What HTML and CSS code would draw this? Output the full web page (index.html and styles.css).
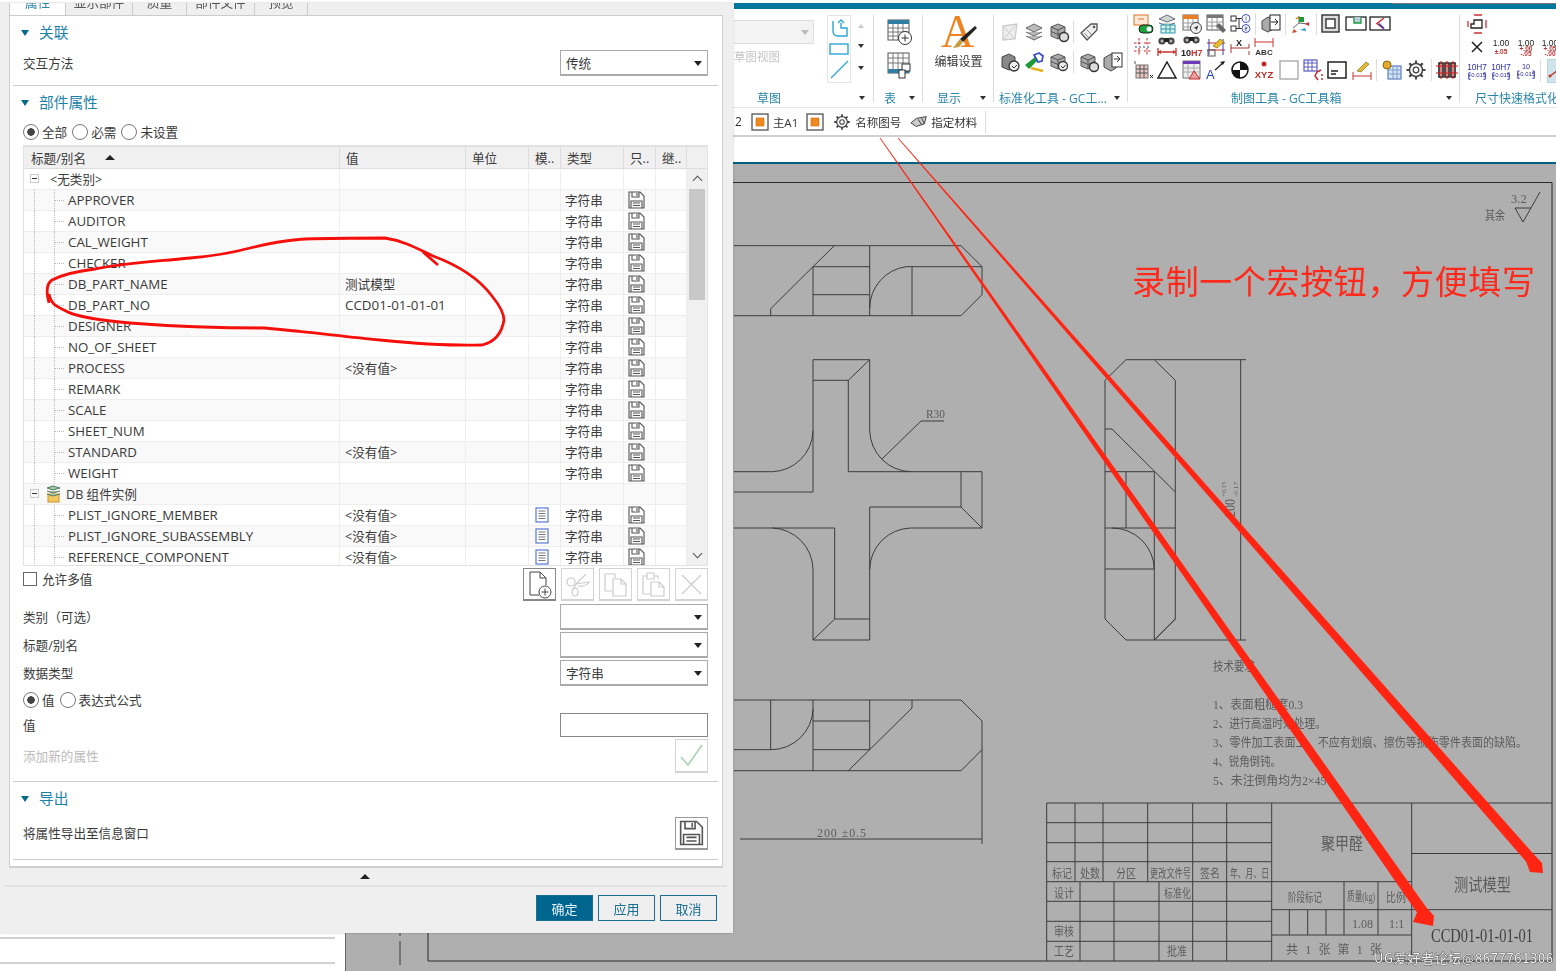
FILE: index.html
```html
<!DOCTYPE html>
<html lang="zh-CN">
<head>
    <meta charset="UTF-8">
    <title>部件属性</title>
    <link rel="stylesheet" href="styles.css">
</head>
<body>
<svg class="defs" width="0" height="0">
    <symbol id="floppy" viewBox="0 0 17 18"><path d="M1 1h11l4 4v12H1zM4 1v5h7V1M9 2v3M3 17v-7h11v7M5 12h7M5 14.500h7" fill="none" stroke="#555" stroke-width="1.100"/></symbol>
    <symbol id="doc" viewBox="0 0 14 16"><rect x="1" y="1" width="12" height="14" fill="#fff" stroke="#5a78d8" stroke-width="1.200"/><path d="M3.500 4h7M3.500 6.500h7M3.500 9h7M3.500 11.500h7" stroke="#777"/></symbol>
    <symbol id="bino" viewBox="0 0 22 22"><circle cx="6" cy="6" r="3.600" fill="#444"/><circle cx="15" cy="6" r="3.600" fill="#444"/><path d="M8 3h5v4H8z" fill="#222"/><circle cx="6" cy="6" r="1.500" fill="#bbb"/><circle cx="15" cy="6" r="1.500" fill="#bbb"/></symbol>
    <symbol id="dim" viewBox="0 0 22 22"><path d="M2 13v8M20 13v8M2 17h18" stroke="#c33" stroke-width="1.300" fill="none"/><path d="M2 17l3-2v4zM20 17l-3-2v4z" fill="#c33"/></symbol>
    <symbol id="cube" viewBox="0 0 22 22"><path d="M3 6l7-3 7 3v9l-7 3-7-3z" fill="#aaa" stroke="#555"/><path d="M3 6l7 3 7-3M10 9v9M3 10.500l7 3 7-3" fill="none" stroke="#555"/></symbol>
    <symbol id="gear" viewBox="0 0 22 22"><circle cx="11" cy="11" r="6.500" fill="none" stroke="#444" stroke-width="1.500"/><circle cx="11" cy="11" r="2.800" fill="none" stroke="#444" stroke-width="1.300"/><path d="M11 1.500v3M11 17.500v3M1.500 11h3M17.500 11h3M4.300 4.300l2.100 2.100M15.600 15.600l2.100 2.100M4.300 17.700l2.100-2.100M15.600 6.400l2.100-2.100" stroke="#444" stroke-width="2.200"/></symbol>
    <symbol id="orange" viewBox="0 0 18 18"><rect x="1" y="1" width="16" height="16" fill="#fff" stroke="#444" stroke-width="1.200"/><rect x="5" y="5" width="8" height="8" fill="#f08a1d" stroke="#c96a10" stroke-width=".6"/></symbol>
    <symbol id="tol" viewBox="0 0 24 22"><text x="12" y="10" text-anchor="middle" font-size="9" font-family="Liberation Sans" fill="#2b2ba8">10H7</text><path d="M3 13v7M21 13v7M3 13h2M3 20h2M21 13h-2M21 20h-2" stroke="#2b2ba8" fill="none"/><text x="12" y="18" text-anchor="middle" font-size="6.500" font-family="Liberation Sans" fill="#2b2ba8">+0.015</text></symbol>
</svg>

<div class="app">
    <div class="title-strip"></div>
    <div class="ribbon">
        <div class="grp g-sketch">
            <div class="grp-body sketch-body">
                <div class="sketch-view">
                    <div class="off-select"></div>
                    <div class="off-text">草图视图</div>
                </div>
                <div class="gallery">
                    <svg width="22" height="22" viewBox="0 0 22 22"><path d="M5 3v10q0 5 5 5h9v-8h-6V5M10 5l3-3 3 3" fill="none" stroke="#2aa5d6" stroke-width="1.400"/></svg>
                    <svg width="22" height="16" viewBox="0 0 22 16"><rect x="2" y="3" width="18" height="10" fill="none" stroke="#2aa5d6" stroke-width="1.400"/></svg>
                    <svg width="22" height="22" viewBox="0 0 22 22"><path d="M3 20L20 3" stroke="#2aa5d6" stroke-width="1.300"/></svg>
                </div>
                <div class="gallery-arrows">
                    <span class="up off"></span>
                    <span class="dn"></span>
                    <span class="more"></span>
                </div>
            </div>
            <div class="grp-label"><span class="lbl-sketch">草图</span><i class="caret"></i></div>
        </div>

        <div class="grp g-table">
            <div class="grp-body col-icons">
                <svg width="26" height="28" viewBox="0 0 26 28"><rect x="1" y="2" width="21" height="20" fill="#fff" stroke="#555"/><rect x="1" y="2" width="21" height="4" fill="#2f7fa3"/><path d="M1 10h21M1 14h21M1 18h21M6 6v16M11 6v16M16 6v16" stroke="#777"/><circle cx="18" cy="20" r="6.500" fill="#fff" stroke="#333"/><path d="M18 16.500v7M14.500 20h7" stroke="#333"/></svg>
                <svg width="26" height="28" viewBox="0 0 26 28"><rect x="1" y="2" width="21" height="20" fill="#fff" stroke="#555"/><rect x="1" y="18" width="21" height="4" fill="#2f7fa3"/><path d="M1 7h21M1 12h21M6 2v16M11 2v16M16 2v16" stroke="#777"/><rect x="15" y="13" width="8" height="7" fill="#fff" stroke="#333"/><rect x="12" y="19" width="6" height="8" fill="#fff" stroke="#333"/></svg>
            </div>
            <div class="grp-label"><span class="lbl-table">表</span><i class="caret"></i></div>
        </div>

        <div class="grp g-show">
            <div class="grp-body show-body">
                <svg width="40" height="36" viewBox="0 0 40 36"><text x="2" y="33" font-family="Liberation Serif" font-size="46" fill="#ef8320">A</text><path d="M36 12l2 2-14 14-3-3z" fill="#222"/><path d="M21 25l3 3-4 5-6 1q3-4 7-9z" fill="#c79b3a"/></svg>
                <div class="show-text">编辑设置</div>
            </div>
            <div class="grp-label"><span class="lbl-show">显示</span><i class="caret"></i></div>
        </div>

        <div class="grp g-std">
            <div class="grp-body std-body">
                <div class="icon-row">
                    <svg class="ic" viewBox="0 0 22 22"><path d="M4 5l14-2-2 15-12 1z" fill="#eee" stroke="#ccc" stroke-width="1.300"/><path d="M4 5l12 13M18 3L4 19" stroke="#ccc"/></svg>
                    <svg class="ic" viewBox="0 0 22 22"><path d="M11 3l8 4-8 4-8-4z M3 11l8 4 8-4M3 15l8 4 8-4" fill="#bbb" stroke="#666"/></svg>
                    <svg class="ic" viewBox="0 0 22 22"><use href="#cube"/><circle cx="16" cy="16" r="4.500" fill="#ddd" stroke="#333" stroke-width="1.400"/></svg>
                    <i class="vsep"></i>
                    <svg class="ic" viewBox="0 0 22 22"><path d="M3 12L13 3h6v6L9 19z" fill="#eee" stroke="#555" stroke-width="1.300"/><circle cx="16" cy="6" r="1.300" fill="#555"/><path d="M6 12l5 5M9 9l5 5" stroke="#888"/></svg>
                </div>
                <div class="icon-row">
                    <svg class="ic" viewBox="0 0 22 22"><path d="M3 6l7-3 6 3v10l-6 3-7-3z" fill="#888" stroke="#444"/><circle cx="15" cy="15" r="5" fill="#eee" stroke="#333" stroke-width="1.300"/><path d="M13 15l2 2 3-3" stroke="#333" fill="none"/></svg>
                    <svg class="ic" viewBox="0 0 22 22"><path d="M2 14L12 6l3 3-9 9z" fill="#1f9a3b"/><path d="M11 4l5-2 4 3-1 5-4 1z" fill="none" stroke="#3b50c8" stroke-width="1.800"/><path d="M8 17l12 3" stroke="#e6b21c" stroke-width="2.500"/></svg>
                    <svg class="ic" viewBox="0 0 22 22"><use href="#cube"/><circle cx="15" cy="15" r="4.500" fill="#eee" stroke="#333" stroke-width="1.300"/><path d="M13 15l2 2 2.500-3" stroke="#333" fill="none"/></svg>
                    <i class="vsep"></i>
                    <svg class="ic" viewBox="0 0 22 22"><use href="#cube"/><circle cx="16" cy="16" r="4.500" fill="#ddd" stroke="#333" stroke-width="1.400"/></svg>
                    <svg class="ic" viewBox="0 0 22 22"><path d="M2 7l7-4 5 2v12l-5 3-7-4z" fill="#aaa" stroke="#444"/><rect x="10" y="2" width="10" height="14" fill="#fff" stroke="#333"/><path d="M12 8h6M15 5l3 3-3 3" stroke="#333" fill="none"/></svg>
                </div>
            </div>
            <div class="grp-label"><span class="lbl-std">标准化工具 - GC工...</span><i class="caret"></i></div>
        </div>

        <div class="grp g-gc">
            <div class="grp-body gc-body">
                <div class="gc-row">
                    <svg class="ic" viewBox="0 0 22 22"><rect x="2" y="2" width="14" height="10" fill="#fde9d6" stroke="#d8742a"/><path d="M6 6h6" stroke="#d8742a"/><rect x="7" y="12" width="14" height="8" rx="4" fill="#1aa33c" stroke="#222"/><circle cx="17" cy="16" r="2.500" fill="#fff"/></svg>
                    <svg class="ic" viewBox="0 0 22 22"><path d="M11 2l8 4-8 3-8-3zM3 10l8 3 8-3" fill="#cfd8cc" stroke="#668"/><rect x="5" y="12" width="14" height="8" fill="#d8f0e6" stroke="#2a9ab0"/><path d="M5 16h14M10 12v8M14 12v8" stroke="#2a9ab0"/></svg>
                    <svg class="ic" viewBox="0 0 22 22"><rect x="2" y="2" width="15" height="15" fill="#fff" stroke="#666"/><rect x="2" y="2" width="15" height="4" fill="#e87f24"/><path d="M2 10h15M2 14h15M7 6v11M12 6v11" stroke="#999"/><circle cx="15" cy="15" r="5.500" fill="#eee" stroke="#444"/><path d="M12.500 15l5-2.500-2 5-.8-2z" fill="#333"/></svg>
                    <svg class="ic" viewBox="0 0 22 22"><rect x="2" y="2" width="16" height="15" fill="#fff" stroke="#555"/><rect x="2" y="2" width="16" height="3" fill="#777"/><path d="M2 9h16M2 13h16M7 5v12M12 5v12" stroke="#999"/><path d="M11 13l7 7 3-3-7-7z" fill="#666"/></svg>
                    <svg class="ic" viewBox="0 0 22 22"><rect x="2" y="3" width="5" height="5" fill="none" stroke="#333"/><rect x="2" y="13" width="5" height="5" fill="none" stroke="#333"/><path d="M7 5.500h6M7 15.500h6M10 5.500v10" stroke="#333"/><circle cx="17" cy="5.500" r="4" fill="none" stroke="#4450c8"/><circle cx="17" cy="15.500" r="4" fill="none" stroke="#4450c8"/><path d="M17 3.500v4M16 14h2v1.500h-2v1.500h2" stroke="#4450c8" fill="none" stroke-width=".8"/></svg>
                    <i class="vsep"></i>
                    <svg class="ic" viewBox="0 0 22 22"><path d="M2 8l6-4 5 2v10l-5 3-6-3z" fill="#aaa" stroke="#444"/><rect x="10" y="2" width="10" height="15" fill="#fff" stroke="#222"/><path d="M11 9h7M15 6l3 3-3 3" stroke="#222" fill="none"/></svg>
                    <i class="vsep"></i>
                    <svg class="ic" viewBox="0 0 22 22"><path d="M9 10l-6 5M9 10v-7M9 10l9 1" stroke="#666" fill="none"/><path d="M4 16l-2 4 5-1z" fill="#d8442a"/><path d="M5 6l4-3 1 3z" fill="#e8842a"/><rect x="9" y="4" width="5" height="5" fill="#1a9a3a"/><path d="M15 11l4-2v4z" fill="#d82a2a"/><path d="M10 17l5-2 1 3z" fill="#1a9ad8"/></svg>
                    <i class="vsep"></i>
                    <svg class="ic" viewBox="0 0 22 22"><rect x="2" y="2" width="17" height="17" fill="#ddd" stroke="#222" stroke-width="1.300"/><rect x="6" y="6" width="9" height="9" fill="#fff" stroke="#222" stroke-width="1.300"/></svg>
                    <svg class="ic" viewBox="0 0 22 22"><rect x="1" y="4" width="20" height="13" fill="#fff" stroke="#222" stroke-width="1.300"/><path d="M9 4v6h7V4" fill="#bcd" stroke="#1a9a3a" stroke-width="1.300"/></svg>
                    <svg class="ic" viewBox="0 0 22 22"><rect x="1" y="4" width="20" height="13" fill="#fff" stroke="#222" stroke-width="1.300"/><path d="M15 5l-7 5.500 7 5.500" fill="none" stroke="#d82a2a" stroke-width="1.500"/><path d="M10 10.500l5 5" stroke="#2a40d8" stroke-width="1.500"/></svg>
                </div>
                <div class="gc-row">
                    <svg class="ic" viewBox="0 0 22 22"><path d="M2 7h8M12 7h8M2 15h8M12 15h8M7 2v8M15 2v8M7 12v8M15 12v8" stroke="#c32a2a" stroke-dasharray="2.500 1.500"/><path d="M3 11h16" stroke="#3a3ab8" stroke-dasharray="2 2"/></svg>
                    <svg class="ic" viewBox="0 0 22 22"><use href="#bino" width="22" height="22" y="-1"/><use href="#dim" y="-1" width="22" height="22"/></svg>
                    <svg class="ic" viewBox="0 0 22 22"><use href="#bino" width="22" height="22" y="-2"/><text x="0" y="20" font-family="Liberation Sans" font-size="9" font-weight="700" fill="#222">10<tspan fill="#c33">H7</tspan></text></svg>
                    <svg class="ic" viewBox="0 0 22 22"><path d="M2 7h18M2 14h18" stroke="#c32a2a"/><path d="M4 3v16M18 3v16" stroke="#3a3ab8"/><path d="M8 10l7-7 4 3-7 6z" fill="#e6bd2c" stroke="#8a6a10" stroke-width=".7"/><rect x="3" y="14" width="7" height="6" fill="none" stroke="#555"/></svg>
                    <svg class="ic" viewBox="0 0 22 22"><path d="M2 8v9M20 8v4M20 15v4M2 12h18" stroke="#a33" fill="none"/><text x="7" y="10" font-family="Liberation Sans" font-size="9" font-weight="700" fill="#222">X</text></svg>
                    <svg class="ic" viewBox="0 0 22 22"><path d="M2 2v9M20 2v9M2 6h18" stroke="#c33"/><text x="11" y="19" text-anchor="middle" font-family="Liberation Sans" font-size="8" font-weight="700" fill="#333">ABC</text></svg>
                </div>
                <div class="gc-row">
                    <svg class="ic" viewBox="0 0 22 22"><path d="M3 2v3" stroke="#555"/><rect x="4" y="6" width="12" height="13" fill="#e8c9c4" stroke="#777"/><path d="M4 10h12M4 14h12M8 6v13M12 6v13" stroke="#555"/><path d="M18 16l3 3M21 16l-3 3" stroke="#222"/></svg>
                    <svg class="ic" viewBox="0 0 22 22"><path d="M11 3l9 16H2z" fill="none" stroke="#222" stroke-width="1.500"/></svg>
                    <svg class="ic" viewBox="0 0 22 22"><rect x="2" y="2" width="17" height="17" fill="#eee" stroke="#777"/><rect x="2" y="2" width="17" height="3" fill="#6a3ab8"/><path d="M2 9h17M2 13h17M7 5v14M13 5v14" stroke="#aaa"/><path d="M13 12l6 8H8z" fill="#e8a0a0" stroke="#c32a2a"/></svg>
                    <svg class="ic" viewBox="0 0 22 22"><text x="1" y="20" font-family="Liberation Sans" font-size="13" fill="#2a40b8">A</text><path d="M10 11l9-8" stroke="#222" stroke-width="1.300"/><path d="M20 2l-5 1 3 3z" fill="#222"/></svg>
                    <svg class="ic" viewBox="0 0 22 22"><circle cx="11" cy="11" r="8" fill="#fff" stroke="#111" stroke-width="1.500"/><path d="M11 3a8 8 0 0 1 8 8h-8zM11 19a8 8 0 0 1-8-8h8z" fill="#111"/></svg>
                    <svg class="ic" viewBox="0 0 22 22"><circle cx="11" cy="5" r="2.500" fill="#c32a2a"/><text x="11" y="19" text-anchor="middle" font-family="Liberation Sans" font-size="9.500" font-weight="700" fill="#c32a2a">XYZ</text></svg>
                    <svg class="ic" viewBox="0 0 22 22"><rect x="2" y="2" width="18" height="18" fill="#fff" stroke="#aaa" stroke-width="1.400"/></svg>
                    <svg class="ic" viewBox="0 0 22 22"><rect x="2" y="1" width="13" height="11" fill="#fff" stroke="#3a3ab8"/><path d="M2 4h13M2 8h13M6 1v11M10 1v11" stroke="#3a3ab8" stroke-width=".8"/><path d="M19 11l-4 2-2 4 3 4M20 19v2M20 15v2" stroke="#c3202a" fill="none" stroke-width="1.400"/></svg>
                    <svg class="ic" viewBox="0 0 22 22"><rect x="2" y="3" width="18" height="16" fill="#fff" stroke="#222" stroke-width="1.500"/><path d="M5 12h7M5 15h5" stroke="#222" stroke-width="1.300"/></svg>
                    <svg class="ic" viewBox="0 0 22 22"><path d="M2 13v8M20 13v8M2 17h18" stroke="#c33"/><path d="M6 12l9-9 3 2-8 8z" fill="#e6bd2c" stroke="#7a6a30" stroke-width=".7"/></svg>
                    <i class="vsep"></i>
                    <svg class="ic" viewBox="0 0 22 22"><rect x="7" y="7" width="13" height="13" fill="#d8e4f4" stroke="#3a6ab8"/><path d="M7 11h13M7 15h13M12 7v13M16 7v13" stroke="#7a9ac8"/><circle cx="6" cy="6" r="4" fill="#e6a82c" stroke="#8a6a10"/></svg>
                    <svg class="ic" viewBox="0 0 22 22"><use href="#gear"/></svg>
                    <i class="vsep"></i>
                    <svg class="ic" viewBox="0 0 22 22"><path d="M3 4h4v14H3zM9 4h4v14H9zM15 4h4v14h-4z" fill="none" stroke="#222" stroke-width="1.600"/><path d="M0 7h22M0 14h22M5 2v18M11 2v18M17 2v18" stroke="#d81a1a" stroke-width="1.100"/></svg>
                </div>
            </div>
            <div class="grp-label"><span class="lbl-gc">制图工具 - GC工具箱</span><i class="caret"></i></div>
        </div>

        <div class="grp g-fmt">
            <div class="grp-body gc-body fmt-body">
                <div class="gc-row">
                    <svg class="ic" viewBox="0 0 22 22"><path d="M8 7h8v8H5v-4h3z" fill="none" stroke="#222" stroke-width="1.300"/><path d="M8 2h8M8 20h8M2 8v6M20 7v8" stroke="#c33" stroke-width="1.300"/></svg>
                </div>
                <div class="gc-row">
                    <svg class="ic" viewBox="0 0 22 22"><path d="M6 6l10 10M16 6L6 16" stroke="#222" stroke-width="1.500"/></svg>
                    <svg class="ic" viewBox="0 0 22 22"><text x="11" y="10" text-anchor="middle" class="num">1.00</text><text x="11" y="18" text-anchor="middle" class="tolr">±.05</text></svg>
                    <svg class="ic" viewBox="0 0 22 22"><text x="11" y="10" text-anchor="middle" class="num">1.00</text><text x="11" y="15" text-anchor="middle" class="tolr">+.00</text><text x="11" y="20" text-anchor="middle" class="tolr">-.05</text></svg>
                    <svg class="ic" viewBox="0 0 22 22"><text x="11" y="10" text-anchor="middle" class="num">1.00</text><text x="11" y="15" text-anchor="middle" class="tolr">+.05</text><text x="11" y="20" text-anchor="middle" class="tolr">-.00</text></svg>
                </div>
                <div class="gc-row">
                    <svg class="ic" viewBox="0 0 24 22"><use href="#tol"/></svg>
                    <svg class="ic" viewBox="0 0 24 22"><use href="#tol"/></svg>
                    <svg class="ic" viewBox="0 0 24 22"><text x="12" y="9" text-anchor="middle" font-size="8" font-family="Liberation Sans" fill="#2b2ba8">10</text><path d="M3 11v8M21 11v8M3 11h2M3 19h2M21 11h-2M21 19h-2" stroke="#2b2ba8" fill="none"/><text x="12" y="17" text-anchor="middle" font-size="6.500" font-family="Liberation Sans" fill="#2b2ba8">+0.015</text></svg>
                    <i class="vsep"></i>
                    <span class="ic-selected"><svg width="22" height="22" viewBox="0 0 22 22"><path d="M2 16l8-6" stroke="#c33" stroke-width="1.400"/><circle cx="2" cy="16" r="1.500" fill="#c33"/></svg></span>
                </div>
            </div>
            <div class="grp-label"><span class="lbl-fmt">尺寸快速格式化</span></div>
        </div>
    </div>

    <div class="toolbar">
        <span class="tb-text t2">2</span>
        <svg class="tb-orange" width="18" height="18"><use href="#orange"/></svg>
        <span class="tb-text">主A1</span>
        <svg class="tb-orange o2" width="18" height="18"><use href="#orange"/></svg>
        <svg class="tb-gear" width="18" height="18" viewBox="0 0 22 22"><use href="#gear"/></svg>
        <span class="tb-text">名称图号</span>
        <svg class="tb-tag" width="18" height="14" viewBox="0 0 20 14"><path d="M1 8l6-5 11-2-2 8-9 3z" fill="#ccc" stroke="#333"/><path d="M9 4l4 6M13 3l3 6" stroke="#333"/></svg>
        <span class="tb-text">指定材料</span>
        <i class="tb-sep"></i>
    </div>
    <div class="blank-bar"></div>

    <div class="viewport">
        <div class="side">
            <div class="side-row"></div>
            <div class="side-row"></div>
        </div>
        <div class="canvas">
            <svg class="drawing" viewBox="345 165 1211 806" width="1211" height="806">
                <g class="ln">
                    <path d="M400 165V971" stroke-dasharray="24 5 3 5"/>
                    <path d="M428 183.500H1552V962H428z" class="frame"/>

                    <path d="M734 246.700H961L982 267.700V295.700L961 316.700H734"/>
                    <path d="M834.300 246.700L813 267.700L770.700 309.700V316.700M813 267.700V316.700M869.700 246.700V316.700M912 267.700V316.700M813 267.700H869.700M906 267.700H982M813 295.700H869.700"/>
                    <path d="M869.700 309A42 42 0 0 1 906 267.700"/>

                    <path d="M813 493V360.700H869.700V432M813 381.300H848.300L869.700 360.700M848.300 381.300V472.700H982V529L961 508V472.700M961 508H869.700V641H813V570M734 493H813"/>
                    <path d="M813 432A42 42 0 0 1 772.300 472.700H734M869.700 432A42 42 0 0 0 910.700 472.700"/>
                    <path d="M734 529H834.700M772.300 529A42 42 0 0 1 813 570M869.700 570A42 42 0 0 1 910.700 529H982"/>
                    <path d="M834.700 529V620H869.700M834.700 620L813 641"/>
                    <path d="M921 422H944M921 422L882 460"/>

                    <path d="M734 701H961L982 722V845M982 750.700L961 771.700H734M770.700 701V750.700H734M813 701V771.700M869.700 701V750.700M813 722H869.700M813 750.700H869.700M912 701V709L848.300 771.700"/>
                    <path d="M813 710A42 42 0 0 1 770.700 750.700"/>
                    <path d="M740 840H982"/>

                    <path d="M1126 360.700H1154.300L1175.300 381.300V620L1154.300 641H1126L1105 620V381.300z"/>
                    <path d="M1105 430H1112L1175.300 493M1105 472.700H1154.300V641M1126 472.700V529M1105 529H1175.300M1105 570H1154.300M1112 529A42 42 0 0 1 1154.300 570M1175.300 620L1154.300 641"/>
                    <path d="M1154 360.700H1246M1154 641H1246M1240.700 360.700V641"/>
                    <path d="M1515 209H1531M1515 209L1523 223L1540 193"/>

                    <path d="M1046.700 804H1552M1046.700 823.700H1271.700M1046.700 843.700H1271.700M1046.700 862.700H1271.700M1046.700 882.700H1411.700M1046.700 902.300H1271.700M1046.700 922.300H1271.700M1046.700 942.300H1271.700"/>
                    <path d="M1046.700 804V962M1075 804V882.700M1103 804V882.700M1147.700 804V882.700M1192.700 804V962M1226.700 804V962M1271.700 804V962M1080 882.700V962M1114 882.700V962M1159 882.700V962M1411.700 804V962"/>
                    <path d="M1271.700 910.700H1552M1271.700 936H1411.700M1344 882.700V936M1378 882.700V936M1289.300 910.700V936M1307.700 910.700V936M1326 910.700V936M1411.700 854.500H1552"/>
                </g>
                <g class="dt">
                    <text x="926" y="419" class="s" textLength="19" lengthAdjust="spacingAndGlyphs">R30</text>
                    <text x="1511" y="204" class="s">3.2</text>
                    <text x="1485" y="221" class="s" textLength="20" lengthAdjust="spacingAndGlyphs">其余</text>
                    <text x="817" y="838" textLength="49">200 ±0.5</text>
                    <text x="1235" y="518" transform="rotate(-90 1235 518)" class="md" textLength="18" lengthAdjust="spacingAndGlyphs">200</text>
                    <text x="1226" y="498" transform="rotate(-90 1226 498)" class="tiny" textLength="15" lengthAdjust="spacingAndGlyphs">+0.15</text>
                    <text x="1238" y="498" transform="rotate(-90 1238 498)" class="tiny" textLength="15" lengthAdjust="spacingAndGlyphs">-0.17</text>

                    <text x="1213" y="672" class="s" textLength="42" lengthAdjust="spacingAndGlyphs">技术要求</text>
                    <text x="1213" y="710" class="s" textLength="90" lengthAdjust="spacingAndGlyphs">1、表面粗糙度0.3</text>
                    <text x="1213" y="729" class="s" textLength="113" lengthAdjust="spacingAndGlyphs">2、进行高温时效处理。</text>
                    <text x="1213" y="748" class="s" textLength="314" lengthAdjust="spacingAndGlyphs">3、零件加工表面上，不应有划痕、擦伤等损伤零件表面的缺陷。</text>
                    <text x="1213" y="767" class="s" textLength="68" lengthAdjust="spacingAndGlyphs">4、锐角倒钝。</text>
                    <text x="1213" y="786" class="s" textLength="130" lengthAdjust="spacingAndGlyphs">5、未注倒角均为2×45°。</text>

                    <text x="1052" y="879" class="xs" textLength="20" lengthAdjust="spacingAndGlyphs">标记</text>
                    <text x="1080" y="879" class="xs" textLength="20" lengthAdjust="spacingAndGlyphs">处数</text>
                    <text x="1116" y="879" class="xs" textLength="20" lengthAdjust="spacingAndGlyphs">分区</text>
                    <text x="1150" y="879" class="xs" textLength="41" lengthAdjust="spacingAndGlyphs">更改文件号</text>
                    <text x="1200" y="879" class="xs" textLength="20" lengthAdjust="spacingAndGlyphs">签名</text>
                    <text x="1230" y="879" class="xs" textLength="39" lengthAdjust="spacingAndGlyphs">年、月、日</text>
                    <text x="1054" y="899" class="xs" textLength="20" lengthAdjust="spacingAndGlyphs">设计</text>
                    <text x="1164" y="899" class="xs" textLength="27" lengthAdjust="spacingAndGlyphs">标准化</text>
                    <text x="1054" y="937" class="xs" textLength="20" lengthAdjust="spacingAndGlyphs">审核</text>
                    <text x="1054" y="957" class="xs" textLength="20" lengthAdjust="spacingAndGlyphs">工艺</text>
                    <text x="1167" y="957" class="xs" textLength="20" lengthAdjust="spacingAndGlyphs">批准</text>
                    <text x="1321" y="851" class="lg" textLength="42" lengthAdjust="spacingAndGlyphs">聚甲醛</text>
                    <text x="1288" y="903" class="xs" textLength="34" lengthAdjust="spacingAndGlyphs">阶段标记</text>
                    <text x="1347" y="902" class="xs" textLength="28" lengthAdjust="spacingAndGlyphs">质量(kg)</text>
                    <text x="1386" y="903" class="xs" textLength="20" lengthAdjust="spacingAndGlyphs">比例</text>
                    <text x="1352" y="929" class="xs">1.08</text>
                    <text x="1389" y="929" class="xs">1:1</text>
                    <text x="1286" y="955" class="xs" textLength="96">共 1 张 第 1 张</text>
                    <text x="1454" y="892" class="lg" textLength="57" lengthAdjust="spacingAndGlyphs">测试模型</text>
                    <text x="1431" y="943" class="ccd" textLength="102" lengthAdjust="spacingAndGlyphs">CCD01-01-01-01</text>
                </g>
            </svg>
        </div>
    </div>
</div>

<div class="dialog">
    <div class="tabs">
        <div class="tab active w1">属性</div>
        <div class="tab w2">显示部件</div>
        <div class="tab w3">质量</div>
        <div class="tab w4">部件文件</div>
        <div class="tab w5">预览</div>
    </div>
    <div class="panel">
        <section class="sec sec1">
            <div class="sec-head"><i class="tri"></i>关联</div>
            <div class="row field-top">
                <span>交互方法</span>
                <div class="sel">传统</div>
            </div>
        </section>

        <section class="sec sec2">
            <div class="sec-head"><i class="tri"></i>部件属性</div>
            <div class="radios filter">
                <label class="radio on">全部</label>
                <label class="radio">必需</label>
                <label class="radio">未设置</label>
            </div>

            <div class="table">
                <div class="thead">
                    <div class="th th-name">标题/别名<i class="sort"></i></div>
                    <div class="th">值</div>
                    <div class="th">单位</div>
                    <div class="th">模..</div>
                    <div class="th">类型</div>
                    <div class="th">只..</div>
                    <div class="th">继..</div>
                    <div class="th th-last"></div>
                </div>
                <div class="tbody">
                    <div class="rows">
                        <div class="tr"><div class="td cat"><i class="mbox"></i><span class="cat-text">&lt;无类别&gt;</span></div><div class="td"></div><div class="td"></div><div class="td"></div><div class="td"></div><div class="td"></div><div class="td"></div></div>
                        <div class="tr"><div class="td leaf">APPROVER</div><div class="td"></div><div class="td"></div><div class="td"></div><div class="td ty">字符串</div><div class="td ro"><svg class="fl"><use href="#floppy"/></svg></div><div class="td"></div></div>
                        <div class="tr"><div class="td leaf">AUDITOR</div><div class="td"></div><div class="td"></div><div class="td"></div><div class="td ty">字符串</div><div class="td ro"><svg class="fl"><use href="#floppy"/></svg></div><div class="td"></div></div>
                        <div class="tr"><div class="td leaf">CAL_WEIGHT</div><div class="td"></div><div class="td"></div><div class="td"></div><div class="td ty">字符串</div><div class="td ro"><svg class="fl"><use href="#floppy"/></svg></div><div class="td"></div></div>
                        <div class="tr"><div class="td leaf">CHECKER</div><div class="td"></div><div class="td"></div><div class="td"></div><div class="td ty">字符串</div><div class="td ro"><svg class="fl"><use href="#floppy"/></svg></div><div class="td"></div></div>
                        <div class="tr"><div class="td leaf">DB_PART_NAME</div><div class="td val">测试模型</div><div class="td"></div><div class="td"></div><div class="td ty">字符串</div><div class="td ro"><svg class="fl"><use href="#floppy"/></svg></div><div class="td"></div></div>
                        <div class="tr"><div class="td leaf">DB_PART_NO</div><div class="td val-latin">CCD01-01-01-01</div><div class="td"></div><div class="td"></div><div class="td ty">字符串</div><div class="td ro"><svg class="fl"><use href="#floppy"/></svg></div><div class="td"></div></div>
                        <div class="tr"><div class="td leaf">DESIGNER</div><div class="td"></div><div class="td"></div><div class="td"></div><div class="td ty">字符串</div><div class="td ro"><svg class="fl"><use href="#floppy"/></svg></div><div class="td"></div></div>
                        <div class="tr"><div class="td leaf">NO_OF_SHEET</div><div class="td"></div><div class="td"></div><div class="td"></div><div class="td ty">字符串</div><div class="td ro"><svg class="fl"><use href="#floppy"/></svg></div><div class="td"></div></div>
                        <div class="tr"><div class="td leaf">PROCESS</div><div class="td val">&lt;没有值&gt;</div><div class="td"></div><div class="td"></div><div class="td ty">字符串</div><div class="td ro"><svg class="fl"><use href="#floppy"/></svg></div><div class="td"></div></div>
                        <div class="tr"><div class="td leaf">REMARK</div><div class="td"></div><div class="td"></div><div class="td"></div><div class="td ty">字符串</div><div class="td ro"><svg class="fl"><use href="#floppy"/></svg></div><div class="td"></div></div>
                        <div class="tr"><div class="td leaf">SCALE</div><div class="td"></div><div class="td"></div><div class="td"></div><div class="td ty">字符串</div><div class="td ro"><svg class="fl"><use href="#floppy"/></svg></div><div class="td"></div></div>
                        <div class="tr"><div class="td leaf">SHEET_NUM</div><div class="td"></div><div class="td"></div><div class="td"></div><div class="td ty">字符串</div><div class="td ro"><svg class="fl"><use href="#floppy"/></svg></div><div class="td"></div></div>
                        <div class="tr"><div class="td leaf">STANDARD</div><div class="td val">&lt;没有值&gt;</div><div class="td"></div><div class="td"></div><div class="td ty">字符串</div><div class="td ro"><svg class="fl"><use href="#floppy"/></svg></div><div class="td"></div></div>
                        <div class="tr"><div class="td leaf">WEIGHT</div><div class="td"></div><div class="td"></div><div class="td"></div><div class="td ty">字符串</div><div class="td ro"><svg class="fl"><use href="#floppy"/></svg></div><div class="td"></div></div>
                        <div class="tr"><div class="td cat"><i class="mbox"></i><svg class="db-ico" width="18" height="18" viewBox="0 0 18 18"><rect x="3" y="9" width="11" height="8" fill="#f4c860" stroke="#c8962c"/><path d="M2 3l6-2 7 2-7 2zM2 6l6 2 7-2M2 9l6 2 7-2" fill="#9ac8a8" stroke="#5a7a68"/></svg><span>DB 组件实例</span></div><div class="td"></div><div class="td"></div><div class="td"></div><div class="td"></div><div class="td"></div><div class="td"></div></div>
                        <div class="tr"><div class="td leaf">PLIST_IGNORE_MEMBER</div><div class="td val">&lt;没有值&gt;</div><div class="td"></div><div class="td md"><svg class="dc"><use href="#doc"/></svg></div><div class="td ty">字符串</div><div class="td ro"><svg class="fl"><use href="#floppy"/></svg></div><div class="td"></div></div>
                        <div class="tr"><div class="td leaf">PLIST_IGNORE_SUBASSEMBLY</div><div class="td val">&lt;没有值&gt;</div><div class="td"></div><div class="td md"><svg class="dc"><use href="#doc"/></svg></div><div class="td ty">字符串</div><div class="td ro"><svg class="fl"><use href="#floppy"/></svg></div><div class="td"></div></div>
                        <div class="tr"><div class="td leaf">REFERENCE_COMPONENT</div><div class="td val">&lt;没有值&gt;</div><div class="td"></div><div class="td md"><svg class="dc"><use href="#doc"/></svg></div><div class="td ty">字符串</div><div class="td ro"><svg class="fl"><use href="#floppy"/></svg></div><div class="td"></div></div>
                    </div>
                    <div class="scroll">
                        <span class="chev up"></span>
                        <div class="thumb"></div>
                        <span class="chev down"></span>
                    </div>
                </div>
            </div>

            <div class="row tools-row">
                <label class="check"><i class="box"></i>允许多值</label>
                <div class="tools">
                    <button class="tool main">
                        <svg width="27" height="29" viewBox="0 0 27 29"><path d="M13 25H4V2h10l6 6v7M14 2v6h6" fill="none" stroke="#444"/><circle cx="19" cy="22" r="6" fill="#fff" stroke="#444"/><path d="M19 18.500v7M15.500 22h7" stroke="#444"/></svg>
                    </button>
                    <button class="tool">
                        <svg width="27" height="27" viewBox="0 0 27 27"><path d="M12 13L22 3M12 13l-3 6M12 13l13-2q-3 5-11 4" fill="none" stroke="#ccc" stroke-width="1.200"/><circle cx="7" cy="11" r="4" fill="none" stroke="#ccc" stroke-width="1.200"/><ellipse cx="11" cy="21" rx="3" ry="4" fill="none" stroke="#ccc" stroke-width="1.200"/></svg>
                    </button>
                    <button class="tool">
                        <svg width="27" height="27" viewBox="0 0 27 27"><path d="M11 20H3V3h10v4M11 8h8l5 5v12H11zM19 8v5h5" fill="none" stroke="#ccc" stroke-width="1.200"/></svg>
                    </button>
                    <button class="tool">
                        <svg width="27" height="27" viewBox="0 0 27 27"><path d="M11 23H3V5h4V2h7v3h4v3M7 5v3h7V5M11 11h8l5 5v9H11zM19 11v5h5" fill="none" stroke="#ccc" stroke-width="1.200"/></svg>
                    </button>
                    <button class="tool">
                        <svg width="27" height="27" viewBox="0 0 27 27"><path d="M4 4l19 19M23 4L4 23" stroke="#ccc" stroke-width="1.200"/></svg>
                    </button>
                </div>
            </div>

            <div class="row sel-row first"><span>类别（可选）</span><div class="sel"></div></div>
            <div class="row sel-row"><span>标题/别名</span><div class="sel"></div></div>
            <div class="row sel-row"><span>数据类型</span><div class="sel">字符串</div></div>
            <div class="radios value-type">
                <label class="radio on">值</label>
                <label class="radio">表达式公式</label>
            </div>
            <div class="row value-row"><span>值</span><div class="input"></div></div>
            <div class="row add-row">
                <span class="muted">添加新的属性</span>
                <button class="tool">
                    <svg width="27" height="27" viewBox="0 0 27 27"><path d="M3 15l7 8L24 3" fill="none" stroke="#a9d0b0" stroke-width="1.600"/></svg>
                </button>
            </div>
        </section>

        <section class="sec sec3">
            <div class="sec-head"><i class="tri"></i>导出</div>
            <div class="row export-row">
                <span>将属性导出至信息窗口</span>
                <button class="tool">
                    <svg width="25" height="26"><use href="#floppy"/></svg>
                </button>
            </div>
        </section>
    </div>

    <div class="collapse"><i class="up-tri"></i></div>
    <div class="actions">
        <button class="btn primary">确定</button>
        <button class="btn">应用</button>
        <button class="btn">取消</button>
    </div>
</div>

<svg class="notes" width="1556" height="971" viewBox="0 0 1556 971">
    <path class="ring" d="M423 252L438 265M49 303C46 292 46 284 52 280C62 275 78 271 95 269C125 263 150 262 190 258C215 256 235 252 250 248C270 243 285 240 305 239C335 238 365 238 385 238C405 241 420 250 433 256C460 266 480 280 492 296C500 306 504 314 504 320C502 332 495 342 482 345C450 346 420 344 380 340C340 336 300 331 265 328C225 328 180 327 130 323C100 320 75 317 64 310C56 306 51 304 49 294"/>
    <polygon class="arrow" points="880.300,137.800 1426,907 1434,916 1433,926 1413,922 1417,912.500 879.700,138.200"/>
    <polygon class="arrow" points="898.300,137.800 1534,854.400 1542,863 1543,873 1530,872 1526,861.600 897.700,138.200"/>
    <text class="note" x="1132" y="294" textLength="403">录制一个宏按钮，方便填写</text>
    <text class="wm" x="1374" y="963" textLength="179">UG爱好者论坛@8677761306</text>
</svg>
</body>
</html>
```

FILE: styles.css
```css
* {
    box-sizing: border-box;
}

html, body {
    margin: 0;
    height: 971px;
    overflow: hidden;
}

body {
    position: relative;
    width: 1556px;
    background-color: #fff;
    color: #3a3a3a;
    font-family: "Open Sans", "Noto Sans CJK SC", sans-serif;
    font-size: 12.6px;
    filter: blur(.3px);
}

.defs {
    position: absolute;
}

button {
    font-family: inherit;
}

/* main window behind the dialog */
.app {
    display: flex;
    flex-direction: column;
    height: 971px;
}

.title-strip {
    height: 6px;
    margin-top: 3px;
    margin-left: 734px;
    background: linear-gradient(#777, #777) right top / 164px 1px no-repeat, #04779f;
}

.ribbon {
    display: flex;
    height: 99px;
    padding-left: 734px;
    border-bottom: 1px solid #e6e6e6;
}

.grp {
    flex: none;
    display: flex;
    flex-direction: column;
    height: 98px;
    background: linear-gradient(#dcdcdc, #dcdcdc) right 6px / 1px 87px no-repeat;
}

.g-sketch { width: 140px; }
.g-table { width: 49px; }
.g-show { width: 71px; }
.g-std { width: 134px; }
.g-gc { width: 332px; }
.g-fmt { flex: 1; min-width: 0; overflow: hidden; background: none; }

.grp-body {
    height: 80px;
}

.grp-label {
    display: flex;
    align-items: center;
    height: 18px;
    color: #2a86ab;
    font-size: 12px;
    white-space: nowrap;
}

.caret {
    width: 0;
    height: 0;
    border-left: 3.5px solid transparent;
    border-right: 3.5px solid transparent;
    border-top: 4px solid #333;
    margin-left: auto;
}

.lbl-sketch { margin-left: 23px; }
.g-sketch .caret { margin-right: 9px; }
.lbl-table { margin-left: 10px; }
.g-table .caret { margin-right: 8px; }
.lbl-show { margin-left: 14px; }
.g-show .caret { margin-right: 8px; }
.lbl-std { margin-left: 5px; }
.g-std .caret { margin-right: 8px; }
.lbl-gc { margin-left: 103px; }
.g-gc .caret { margin-right: 8px; }
.lbl-fmt { margin-left: 15px; }

.sketch-body {
    display: flex;
    align-items: flex-start;
}

.sketch-view {
    width: 80px;
    padding-top: 11px;
}

.off-select {
    position: relative;
    height: 24px;
    background-color: #f3f3f3;
    border: 1px solid #ddd;
    border-left: none;
}

.off-select::after {
    content: "";
    position: absolute;
    right: 4px;
    top: 9px;
    border-left: 4px solid transparent;
    border-right: 4px solid transparent;
    border-top: 5px solid #bbb;
}

.off-text {
    color: #c4c4c4;
    font-size: 11.5px;
    margin-top: 4px;
}

.gallery {
    display: flex;
    flex-direction: column;
    align-items: center;
    justify-content: space-between;
    width: 24px;
    height: 68px;
    margin-top: 6px;
    margin-left: 13px;
    padding: 2px 0;
    border: 1px solid #e4e4e4;
}

.gallery-arrows {
    display: flex;
    flex-direction: column;
    align-items: center;
    gap: 16px;
    width: 20px;
    margin-top: 15px;
}

.gallery-arrows span {
    width: 0;
    height: 0;
    border-left: 3.5px solid transparent;
    border-right: 3.5px solid transparent;
}

.gallery-arrows .up { border-bottom: 4px solid #333; }
.gallery-arrows .up.off { border-bottom-color: #ccc; }
.gallery-arrows .dn { border-top: 4px solid #333; }
.gallery-arrows .more { border-top: 4px solid #333; margin-top: 2px; box-shadow: 0 -4px 0 -3px #333; }

.col-icons {
    display: flex;
    flex-direction: column;
    align-items: center;
    gap: 5px;
    padding-top: 9px;
    padding-left: 2px;
}

.show-body {
    display: flex;
    flex-direction: column;
    align-items: center;
    padding-top: 5px;
}

.show-text {
    margin-top: 2px;
    font-size: 12px;
}

.std-body {
    display: flex;
    flex-direction: column;
    gap: 8px;
    padding-top: 12px;
    padding-left: 5px;
}

.icon-row {
    display: flex;
    align-items: center;
    gap: 2.3px;
}

.ic {
    flex: none;
    width: 22px;
    height: 22px;
}

.vsep {
    flex: none;
    width: 1px;
    height: 22px;
    margin: 0 1.4px;
    background-color: #ddd;
}

.gc-body {
    display: flex;
    flex-direction: column;
    gap: 1px;
    padding-top: 4px;
    padding-left: 4px;
}

.gc-row {
    display: flex;
    align-items: center;
    gap: 2.3px;
}

.fmt-body {
    padding-left: 6px;
}

.num {
    font-family: "Liberation Sans", sans-serif;
    font-size: 8.5px;
    fill: #222;
}

.tolr {
    font-family: "Liberation Sans", sans-serif;
    font-size: 6.5px;
    font-weight: 700;
    fill: #b33;
}

.ic-selected {
    display: block;
    flex: none;
    width: 24px;
    height: 24px;
    margin-left: 2px;
    background-color: #cfe4ea;
    border: 1px solid #b5d4de;
}

.toolbar {
    display: flex;
    align-items: center;
    height: 29px;
    padding-left: 735px;
    border-bottom: 2px solid #d0d0d0;
}

.tb-text {
    font-size: 11.5px;
    color: #333;
}

.t2 { margin-right: 9px; font-size: 12px; }
.tb-orange { margin-right: 4px; flex: none; }
.o2 { margin-left: 8px; margin-right: 9px; }
.tb-gear { margin-right: 4px; flex: none; }
.tb-tag { margin: 0 3px 0 9px; flex: none; }

.tb-sep {
    width: 1px;
    height: 22px;
    margin-left: 8px;
    background-color: #ddd;
}

.blank-bar {
    height: 25px;
    background-color: #fff;
}

.viewport {
    flex: 1;
    display: flex;
    border-top: 2px solid #005f82;
}

.side {
    display: flex;
    flex-direction: column;
    justify-content: flex-end;
    width: 346px;
    padding: 0 10px 7px 0;
    background-color: #fff;
    border-right: 1px solid #666;
}

.side-row {
    height: 25px;
    border-bottom: 2px solid #d2d2d2;
}

.canvas {
    flex: 1;
    position: relative;
    background-color: #afafaf;
}

.drawing {
    position: absolute;
    left: -1px;
    top: 0;
}

.ln path {
    fill: none;
    stroke: #3c3c3c;
    stroke-width: 1;
}

.ln .frame {
    stroke: #2a2a2a;
}

.dt text {
    font-family: "Liberation Serif", "Noto Sans CJK SC", serif;
    font-size: 12px;
    fill: #5c5c5c;
}

.dt .s {
    font-size: 12.5px;
}

.dt .xs {
    font-size: 12px;
}

.dt .lg {
    font-size: 17px;
}

.dt .md {
    font-size: 14px;
}

.dt .tiny {
    font-size: 7px;
}

.dt .ccd {
    font-size: 18px;
    fill: #3f3f3f;
}

/* floating dialog */
.dialog {
    position: absolute;
    left: 0;
    top: 3px;
    display: flex;
    flex-direction: column;
    width: 733px;
    height: 930px;
    background-color: #efefef;
    box-shadow: 0 0 2px rgba(0, 0, 0, .25);
}

.tabs {
    display: flex;
    height: 13px;
    margin-left: 9px;
    margin-right: 10px;
    overflow: hidden;
    border-bottom: 1px solid #ccc;
}

.tab {
    line-height: 0;
    text-align: center;
    border-right: 1px solid #ccc;
    color: #555;
}

.tab.active {
    height: 13px;
    background-color: #fff;
    border-left: 1px solid #ccc;
    color: #2a86ab;
}

.w1 { width: 57px; }
.w2 { width: 67px; }
.w3 { width: 54px; }
.w4 { width: 68px; }
.w5 { width: 53px; }

.panel {
    height: 852px;
    margin-left: 9px;
    width: 714px;
    padding: 1px 4px 0 3px;
    background-color: #fff;
    border: 1px solid #cfcfcf;
    border-top: none;
    border-bottom-width: 2px;
}

.sec {
    padding: 0 10px;
    border-bottom: 1px solid #ccc;
}

.sec-head {
    display: flex;
    align-items: center;
    height: 20px;
    padding-bottom: 4px;
    margin-left: -2px;
    color: #1a82a8;
    font-size: 14.7px;
}

.tri {
    width: 0;
    height: 0;
    margin-right: 10px;
    margin-top: 4px;
    border-left: 4.5px solid transparent;
    border-right: 4.5px solid transparent;
    border-top: 6px solid #06688a;
}

.row {
    display: flex;
    align-items: center;
    justify-content: space-between;
}

.row > span {
    padding-bottom: 2px;
}

.sec1 {
    height: 69px;
    padding-top: 6px;
}

.field-top {
    margin-top: 7px;
}

.sel {
    position: relative;
    display: flex;
    align-items: center;
    width: 148px;
    height: 26px;
    padding-left: 5px;
    background-color: #fff;
    border: 1px solid #aaa;
    border-bottom-width: 2px;
}

.sel::after {
    content: "";
    position: absolute;
    right: 5px;
    top: 10px;
    border-left: 4px solid transparent;
    border-right: 4px solid transparent;
    border-top: 5px solid #222;
}

.sec2 {
    height: 696px;
    padding-top: 7px;
}

.radios {
    display: flex;
    align-items: center;
    gap: 5px;
    height: 20px;
    padding-bottom: 2px;
}

.filter {
    margin-top: 9px;
}

.value-type {
    margin-top: 4px;
}

.radio {
    display: flex;
    align-items: center;
    gap: 3px;
}

.radio::before {
    content: "";
    width: 14px;
    height: 14px;
    margin-top: 2px;
    border: 1px solid #777;
    border-radius: 50%;
    background-color: #fff;
}

.radio.on::before {
    background: radial-gradient(circle, #444 0 3.5px, #fff 4px);
}

/* attribute table */
.table {
    margin-top: 3px;
    border: 1px solid #e2e2e2;
    border-top-width: 2px;
}

.thead, .tr {
    display: grid;
    grid-template-columns: 316px 126px 63px 32px 63px 32px 31px;
}

.thead {
    grid-template-columns: 316px 126px 63px 32px 63px 32px 31px 1fr;
    height: 22px;
    background-color: #f0f0f0;
    border-bottom: 1px solid #ddd;
}

.th {
    display: flex;
    align-items: center;
    padding-left: 6px;
    padding-bottom: 1px;
    border-right: 1px solid #ddd;
    white-space: nowrap;
}

.th-name {
    padding-left: 7px;
}

.th-last {
    border-right: none;
}

.sort {
    width: 0;
    height: 0;
    margin-left: 19px;
    border-left: 5px solid transparent;
    border-right: 5px solid transparent;
    border-bottom: 5px solid #222;
}

.tbody {
    display: flex;
    height: 396px;
}

.rows {
    flex: none;
    width: 663px;
    height: 396px;
    overflow: hidden;
}

.tr {
    height: 21px;
    border-bottom: 1px solid #eee;
}

.tr:nth-child(even) {
    background-color: #f9f9f9;
}

.td {
    display: flex;
    align-items: center;
    padding-left: 4px;
    padding-bottom: 2px;
    border-right: 1px solid #eee;
    white-space: nowrap;
}

.leaf {
    padding-left: 44px;
    font-size: 13.3px;
    background:
        repeating-linear-gradient(#bbb 0 1px, transparent 1px 2px) 10px 0 / 1px 100% no-repeat,
        repeating-linear-gradient(#bbb 0 1px, transparent 1px 2px) 30px 0 / 1px 100% no-repeat,
        repeating-linear-gradient(90deg, #bbb 0 1px, transparent 1px 2px) 31px 50% / 9px 1px no-repeat;
}

.cat {
    padding-left: 6px;
}

.mbox {
    position: relative;
    flex: none;
    width: 9px;
    height: 9px;
    border: 1px solid #ccc;
    background: linear-gradient(#333, #333) center / 5px 1px no-repeat;
}

.cat-text {
    margin-left: 11px;
}

.db-ico {
    margin-left: 6px;
    margin-right: 3px;
}

.val {
    padding-left: 5px;
}

.val-latin {
    padding-left: 5px;
    font-size: 13.4px;
}

.ty {
    padding-left: 4px;
}

.ro {
    padding-left: 4px;
}

.md {
    padding-left: 6px;
}

.fl {
    width: 17px;
    height: 18px;
}

.dc {
    width: 14px;
    height: 16px;
}

.scroll {
    flex: 1;
    display: flex;
    flex-direction: column;
    align-items: center;
    background-color: #f0f0f0;
}

.chev {
    flex: none;
    width: 7px;
    height: 7px;
    border-left: 1.5px solid #555;
    border-top: 1.5px solid #555;
}

.chev.up {
    margin-top: 8px;
    transform: rotate(45deg);
}

.chev.down {
    margin-top: auto;
    margin-bottom: 8px;
    transform: rotate(225deg);
}

.thumb {
    width: 16px;
    height: 111px;
    margin-top: 5px;
    background-color: #c8c8c8;
}

.tools-row {
    align-items: flex-start;
    margin-top: 2px;
}

.check {
    display: flex;
    align-items: center;
    gap: 5px;
    height: 22px;
    padding-bottom: 2px;
}

.box {
    width: 14px;
    height: 14px;
    margin-top: 2px;
    border: 1px solid #666;
    background-color: #fff;
}

.tools {
    display: flex;
    gap: 5px;
}

.tool {
    display: flex;
    align-items: center;
    justify-content: center;
    flex: none;
    width: 33px;
    height: 33px;
    padding: 0;
    background-color: #fff;
    border: 1px solid #d4d4d4;
    border-bottom-width: 2px;
}

.tool.main {
    border-color: #888;
}

.sel-row {
    margin-top: 2px;
}

.sel-row.first {
    margin-top: 3px;
}

.value-row {
    margin-top: 3px;
}

.input {
    width: 148px;
    height: 24px;
    background-color: #fff;
    border: 1px solid #888;
}

.add-row {
    margin-top: 2px;
}

.add-row .tool {
    height: 34px;
}

.muted {
    color: #bbb;
}

.sec3 {
    height: 78px;
    padding-top: 7px;
}

.export-row {
    margin-top: 8px;
}

.export-row .tool {
    border-color: #999;
}

.collapse {
    display: flex;
    align-items: center;
    justify-content: center;
    height: 19px;
    margin: 0 6px 0 4px;
    border-bottom: 2px solid #e2e2e2;
    padding-right: 2px;
}

.up-tri {
    width: 0;
    height: 0;
    border-left: 5px solid transparent;
    border-right: 5px solid transparent;
    border-bottom: 5px solid #222;
}

.actions {
    display: flex;
    justify-content: flex-end;
    gap: 5px;
    margin-top: 8px;
    padding-right: 16px;
}

.btn {
    width: 57px;
    height: 26px;
    padding: 0;
    color: #1a6f92;
    font-size: 13px;
    background-color: #efefef;
    border: 1px solid #1a6f92;
}

.btn.primary {
    color: #e8f2f6;
    background-color: #00658f;
}

/* red markup drawn on top of the screenshot */
.notes {
    position: absolute;
    left: 0;
    top: 0;
    pointer-events: none;
}

.ring {
    fill: none;
    stroke: #f60f0a;
    stroke-width: 2.8;
    stroke-linejoin: round;
}

.arrow {
    fill: #ff2512;
}

.note {
    font-family: "Noto Sans CJK SC", sans-serif;
    font-size: 33px;
    fill: #ff2a1c;
}

.wm {
    font-family: "Noto Sans CJK SC", sans-serif;
    font-size: 13px;
    fill: #f4f4f4;
    stroke: #333;
    stroke-width: .7;
    paint-order: stroke;
}
```
